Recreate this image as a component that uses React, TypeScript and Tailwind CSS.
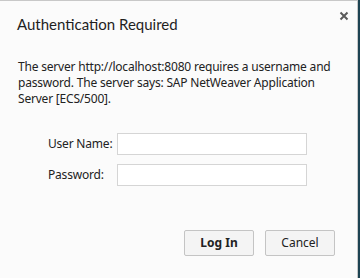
export default function App() {
  return (
    <div className="flex h-[278px] w-[360px] bg-[#1d4352]">
      <div
        className="relative flex h-[278px] w-[358px] flex-col border-r border-t border-[#c8c8c8] bg-[#fbfbfb] text-[#222]"
        style={{ fontFamily: '"Noto Sans", "Open Sans", sans-serif' }}
      >
        <button className="absolute left-[339px] top-[10px] flex h-[10px] w-[10px] items-center justify-center">
          <svg viewBox="0 0 10 10" className="h-[10px] w-[10px]">
            <path d="M1.5 1.5 L8.5 8.5 M8.5 1.5 L1.5 8.5" stroke="#5a5a5a" strokeWidth="2" />
          </svg>
        </button>

        <h1
          className="ml-[17px] mt-[12px] text-[15px] leading-[22px] text-[#1f1f1f]"
          style={{ fontFamily: 'Lato, "Noto Sans", sans-serif' }}
        >
          Authentication Required
        </h1>

        <p className="ml-[18px] mt-[24px] w-[320px] text-[12px] leading-[16px] tracking-[-0.2px]">
          The server http://localhost:8080 requires a username and
          password. The server says: SAP NetWeaver Application Server [ECS/500].
        </p>

        <div className="mt-[26px] grid grid-cols-[69px_190px] gap-y-[9px] pl-[48px] text-[12px] tracking-[-0.2px]">
          <label className="flex items-center">User Name:</label>
          <input className="h-[22px] border border-[#d5d5d5] bg-white outline-none" />
          <label className="flex items-center">Password:</label>
          <input type="password" className="h-[22px] border border-[#d5d5d5] bg-white outline-none" />
        </div>

        <div className="mt-[44px] flex justify-end gap-[11px] pr-[22px] text-[12px]">
          <button className="h-[26px] w-[70px] rounded-[2px] border border-[#c4c4c4] bg-[#f4f4f4] font-bold">
            Log In
          </button>
          <button className="h-[26px] w-[70px] rounded-[2px] border border-[#c4c4c4] bg-[#f4f4f4]">
            Cancel
          </button>
        </div>
      </div>
    </div>
  );
}
